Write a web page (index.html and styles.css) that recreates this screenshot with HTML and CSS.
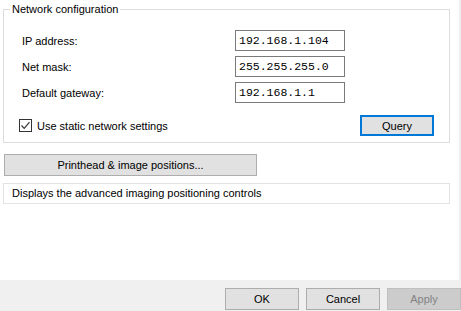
FILE: index.html
```html
<!DOCTYPE html>
<html lang="en">
<head>
    <meta charset="UTF-8">
    <meta name="viewport" content="width=device-width, initial-scale=1.0">
    <title>Network settings</title>
    <link rel="stylesheet" href="styles.css">
</head>
<body>
    <div class="page-panel">
        <fieldset class="group-box">
            <legend>Network configuration</legend>
            <div class="field-row">
                <label class="field-label" for="ip">IP address:</label>
                <input class="field-input" id="ip" type="text" value="192.168.1.104">
            </div>
            <div class="field-row">
                <label class="field-label" for="mask">Net mask:</label>
                <input class="field-input" id="mask" type="text" value="255.255.255.0">
            </div>
            <div class="field-row">
                <label class="field-label" for="gw">Default gateway:</label>
                <input class="field-input" id="gw" type="text" value="192.168.1.1">
            </div>
            <div class="check-row">
                <label class="check-label">
                    <span class="check-box">
                        <svg width="11" height="11" viewBox="0 0 11 11">
                            <path d="M1.5 5.5 L4.2 8.3 L9.5 2.2" fill="none" stroke="#333" stroke-width="1.2"/>
                        </svg>
                    </span>
                    Use static network settings
                </label>
                <button class="win-button focused query-button">Query</button>
            </div>
        </fieldset>

        <button class="win-button wide-button">Printhead &amp; image positions...</button>

        <div class="desc-box">Displays the advanced imaging positioning controls</div>
    </div>

    <div class="dialog-buttons">
        <button class="win-button">OK</button>
        <button class="win-button">Cancel</button>
        <button class="win-button disabled">Apply</button>
    </div>
</body>
</html>
```

FILE: styles.css
```css
body {
    margin: 0;
    padding: 0;
    font-family: "Liberation Sans", Arial, sans-serif;
    font-size: 11px;
    color: #000000;
    background: #f0f0f0;
    width: 461px;
    height: 311px;
    overflow: hidden;
}

.page-panel {
    width: 459px;
    height: 280px;
    background: #ffffff;
    padding-left: 3px;
    box-sizing: border-box;
    display: flex;
    flex-direction: column;
    align-items: flex-start;
}

.group-box {
    width: 447px;
    box-sizing: border-box;
    margin: 2px 0 0 0;
    padding: 13px 15px 6px 17px;
    border: 1px solid #dcdcdc;
    min-width: 0;
}

.group-box legend {
    padding: 0 2px;
    margin-left: -11px;
    line-height: 15px;
}

.field-row {
    display: flex;
    align-items: center;
    height: 21px;
    margin-bottom: 5px;
}

.field-label {
    width: 213px;
    padding-left: 1px;
}

.field-input {
    width: 110px;
    height: 21px;
    box-sizing: border-box;
    border: 1px solid #7a7a7a;
    padding: 0 0 0 3px;
    margin: 0;
    font-family: "Liberation Mono", "Courier New", monospace;
    font-size: 11.5px;
    color: #000000;
    outline: none;
}

.check-row {
    display: flex;
    align-items: center;
    justify-content: space-between;
    margin-top: 12px;
    height: 21px;
}

.check-label {
    display: flex;
    align-items: center;
    gap: 5px;
    margin-left: -2px;
}

.check-box {
    width: 13px;
    height: 13px;
    box-sizing: border-box;
    border: 1px solid #333333;
    background: #ffffff;
    display: flex;
    align-items: center;
    justify-content: center;
}

.win-button {
    font-family: "Liberation Sans", Arial, sans-serif;
    font-size: 11px;
    color: #000000;
    background: #e1e1e1;
    border: 1px solid #adadad;
    height: 21px;
    width: 74px;
    padding: 0;
    margin: 0;
    box-sizing: border-box;
}

.win-button.focused {
    border: 2px solid #0078d7;
}

.wide-button {
    width: 253px;
    margin: 11px 0 0 1px;
    height: 22px;
}

.desc-box {
    width: 447px;
    height: 21px;
    box-sizing: border-box;
    border: 1px solid #e3e3e3;
    margin-top: 7px;
    padding-left: 8px;
    line-height: 19px;
}

.dialog-buttons {
    display: flex;
    justify-content: flex-end;
    gap: 7px;
    padding-top: 8px;
}

.dialog-buttons .win-button {
    height: 22px;
}

.win-button.disabled {
    background: #cccccc;
    border-color: #bfbfbf;
    color: #838383;
}
```
